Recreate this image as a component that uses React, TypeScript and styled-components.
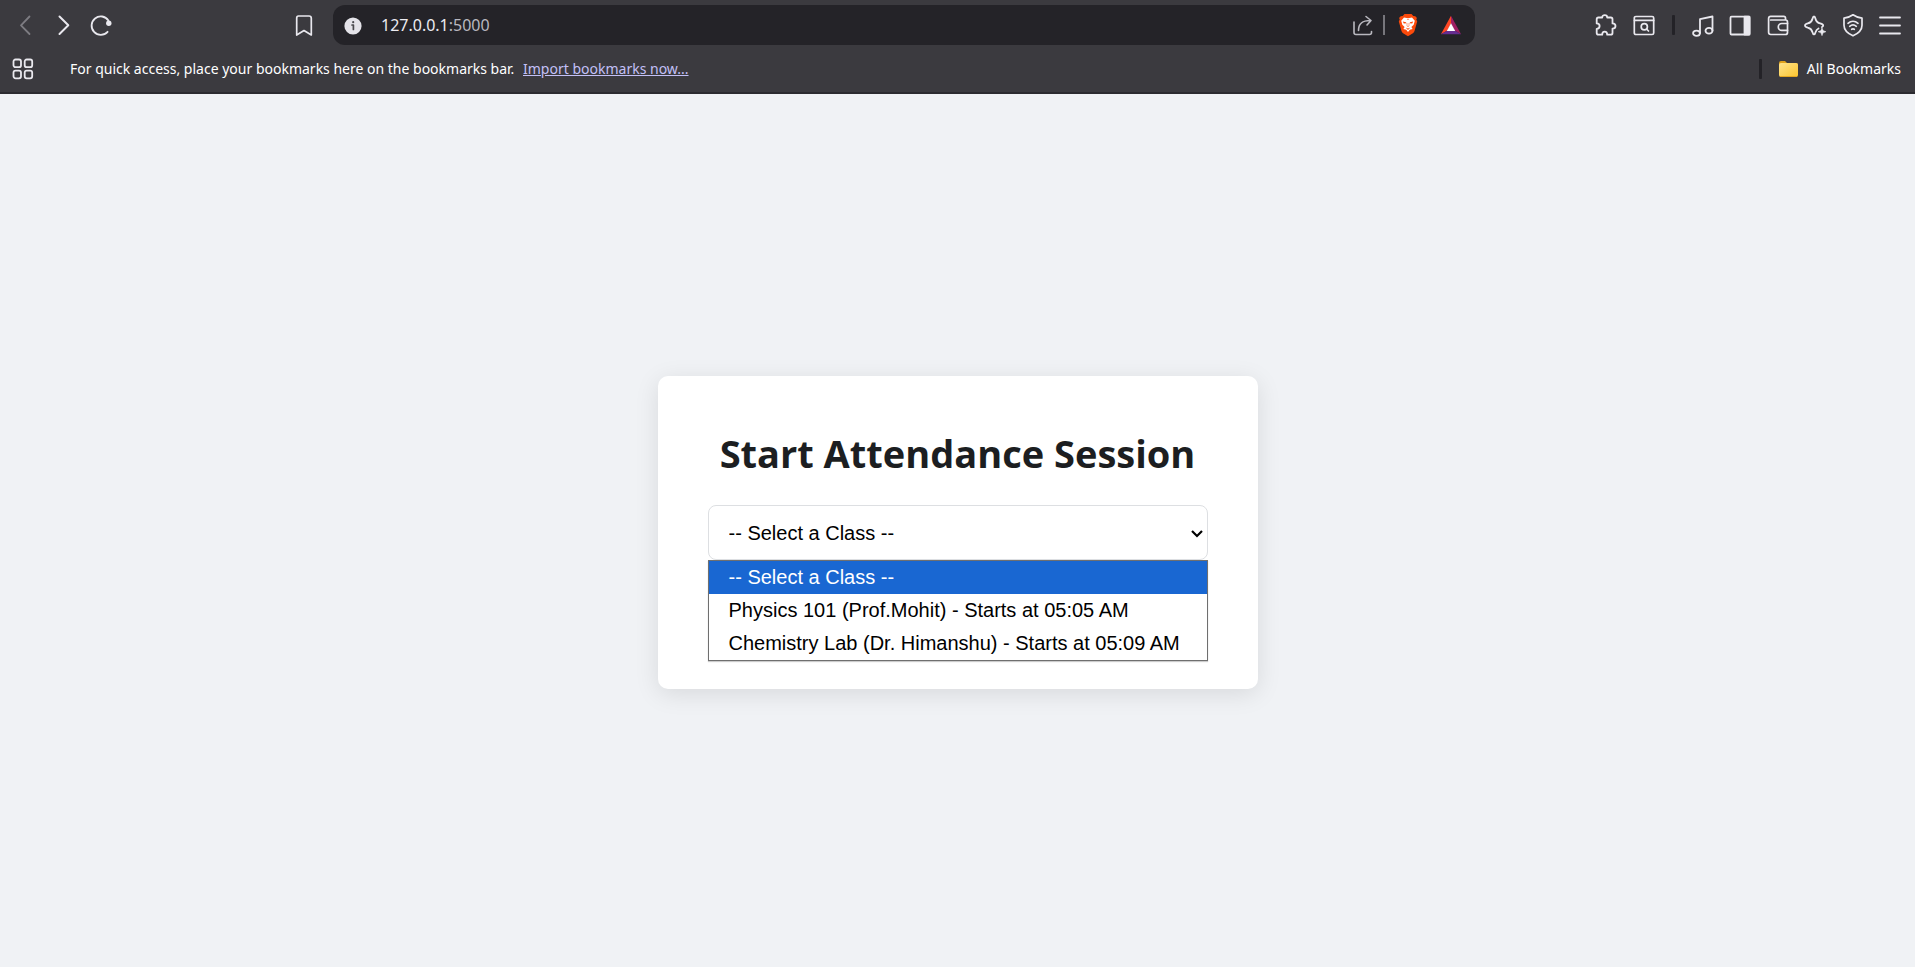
import React from "react";
import styled, { createGlobalStyle } from "styled-components";

const uiFont = '"Segoe UI", "Noto Sans", sans-serif';

const GlobalStyle = createGlobalStyle`
  *, *::before, *::after { box-sizing: border-box; }
  html, body { margin: 0; padding: 0; }
  body { background: #f0f2f5; font-family: ${uiFont}; }
`;

const Window = styled.div`
  display: flex;
  flex-direction: column;
  min-height: 100vh;
`;

const BrowserChrome = styled.header`
  background: #3b3a3f;
  border-bottom: 2px solid #2c2b30;
  color: #fff;
`;

const Toolbar = styled.div`
  display: flex;
  align-items: center;
  height: 50px;
  padding: 0 14px;
`;

const IconButton = styled.button<{ $dim?: boolean }>`
  display: flex;
  align-items: center;
  justify-content: center;
  flex: none;
  width: 22px;
  height: 24px;
  padding: 0;
  border: 0;
  background: none;
  color: ${(p) => (p.$dim ? "#7d7c82" : "#e9e8ee")};
`;

const NavGroup = styled.nav`
  display: flex;
  gap: 16px;
`;

const BookmarkSlot = styled.div`
  display: flex;
  flex: none;
  width: 221px;
  justify-content: flex-end;
  padding-right: 18px;
`;

const AddressBar = styled.form`
  display: flex;
  align-items: center;
  flex: 1;
  min-width: 0;
  height: 40px;
  margin-right: 120px;
  padding: 0 13px 0 9px;
  border-radius: 12px;
  background: #242328;
`;

const AddressField = styled.label`
  position: relative;
  flex: 1;
  min-width: 0;
  height: 24px;
  margin-left: 17px;
  font-size: 16px;
  line-height: 24px;
`;

const AddressInput = styled.input`
  display: block;
  width: 100%;
  height: 24px;
  padding: 0;
  border: 0;
  outline: 0;
  background: none;
  color: transparent;
  font: 16px/24px ${uiFont};
`;

const AddressText = styled.span`
  position: absolute;
  inset: 0;
  pointer-events: none;
  color: #b9b8bf;

  b { font-weight: 400; color: #ecebf1; }
`;

const AddressActions = styled.div`
  display: flex;
  align-items: center;
  button:first-child { color: #b9b8bf; }
`;

const AddressDivider = styled.span`
  width: 2px;
  height: 20px;
  margin: 0 12px 0 10px;
  background: #77767c;
`;

const BadgeGroup = styled.div`
  display: flex;
  gap: 21px;
`;

const ExtensionGroup = styled.div`
  display: flex;
  gap: 16px;
`;

const BarDivider = styled.span`
  flex: none;
  width: 3px;
  height: 20px;
  border-radius: 1px;
  background: #232227;
`;

const ExtensionDivider = styled(BarDivider)`
  margin: 0 17px;
`;

const ToolGroup = styled.div`
  display: flex;
  flex: none;
  justify-content: space-between;
  width: 209px;
`;

const BookmarksBar = styled.div`
  display: flex;
  align-items: center;
  height: 42px;
  padding: 0 14px 4px 12px;
  font-size: 14px;
  line-height: 20px;
`;

const BookmarksHint = styled.p`
  flex: 1;
  margin: 0 0 0 36px;
`;

const ImportLink = styled.a`
  margin-left: 5px;
  color: #c3c0f7;
  text-decoration: underline;
`;

const AllBookmarks = styled.button`
  display: flex;
  align-items: center;
  gap: 8px;
  margin-left: 17px;
  padding: 0;
  border: 0;
  background: none;
  color: #fff;
  font: 14px/20px ${uiFont};
`;

const Page = styled.main`
  display: flex;
  flex: 1;
  align-items: center;
  justify-content: center;
  padding: 20px 16px 16px;
`;

const Card = styled.section`
  width: 100%;
  max-width: 600px;
  padding: 50px;
  border-radius: 10px;
  background: #fff;
  box-shadow: 0 5px 25px rgba(0, 0, 0, 0.1);
`;

const Title = styled.h1`
  margin: 0 0 24px;
  color: #1c1e21;
  font-family: "Segoe UI", "Open Sans", sans-serif;
  font-size: 38px;
  font-weight: 700;
  line-height: 55px;
  text-align: center;
  white-space: nowrap;
`;

const ClassPicker = styled.div`
  position: relative;
  margin-bottom: 79px;
`;

const ClassSelect = styled.select`
  display: block;
  appearance: none;
  width: 100%;
  height: 55px;
  padding: 15px 20px;
  border: 1px solid #dddfe2;
  border-radius: 8px;
  outline: 0;
  background: #fff;
  color: #000;
  font: 20px "Liberation Sans", Arial, sans-serif;
`;

const SelectArrow = styled.svg`
  position: absolute;
  top: 24px;
  right: 4px;
  pointer-events: none;
`;

const OptionList = styled.ul`
  position: absolute;
  top: 100%;
  left: 0;
  right: 0;
  margin: 0;
  padding: 0;
  border: 1px solid #6f6f6f;
  background: #fff;
  box-shadow: 0 1px 1px rgba(0, 0, 0, 0.2);
  list-style: none;
`;

const Option = styled.li`
  height: 33px;
  padding-left: 20px;
  color: #000;
  font: 20px/33px "Liberation Sans", Arial, sans-serif;
  white-space: nowrap;

  &[aria-selected="true"] {
    background: #1967d2;
    color: #fff;
  }
`;

function Glyph({
  children,
  w = 22,
  h = 24,
  sw = 1.6,
}: {
  children: React.ReactNode;
  w?: number;
  h?: number;
  sw?: number;
}) {
  return (
    <svg
      width={w}
      height={h}
      viewBox={`0 0 ${w} ${h}`}
      fill="none"
      stroke="currentColor"
      strokeWidth={sw}
      strokeLinecap="round"
      strokeLinejoin="round"
      aria-hidden="true"
    >
      {children}
    </svg>
  );
}

const BackIcon = () => <Glyph sw={1.8}><path d="M15.500 3.500 7 12.300 15.500 21" /></Glyph>;
const ForwardIcon = () => <Glyph sw={2}><path d="M7.500 3.500 16.300 12.300 7.500 21" /></Glyph>;
const ReloadIcon = () => (
  <Glyph sw={1.8}>
    <path d="M17.600 18.800A9.200 9.200 0 1 1 18.400 7.400" />
    <circle cx="18.800" cy="10.300" r="2.700" fill="currentColor" stroke="none" />
  </Glyph>
);
const BookmarkIcon = () => (
  <Glyph sw={1.7}><path d="M5.500 3h10.500q2.300 0 2.300 2.300V22L11 17.500 3.700 22V5.300Q3.700 3 5.500 3Z" /></Glyph>
);
const InfoIcon = () => (
  <Glyph>
    <circle cx="11" cy="13" r="8.600" fill="#e4e3e9" stroke="none" />
    <path d="M10 12h1.400v4.500" stroke="#4a494e" strokeWidth="1.700" />
    <circle cx="11.200" cy="9.200" r="1.100" fill="#4a494e" stroke="none" />
  </Glyph>
);
const ShareIcon = () => (
  <Glyph sw={1.6}>
    <path d="M3 9v10.500q0 2 2 2h13.500q2 0 2-2V18.500" />
    <path d="M7.500 17.500C7.500 11 10.500 7.500 19.500 7.500M15 3.500l5 4-4 4.500" />
  </Glyph>
);
const BraveIcon = () => (
  <svg width="22" height="24" viewBox="0 0 22 24" aria-hidden="true">
    <path
      d="M7.500 1h7l1.800 2q2.300-.5 3.600 2l-.6 1.400.9 2.200-2.700 9.500q-.4 1.400-1.600 2.200L11 23.200l-4.900-2.900q-1.200-.8-1.600-2.200L1.800 8.600l.9-2.200L2.100 5q1.300-2.500 3.600-2Z"
      fill="#fb4a0b"
    />
    <path
      d="M7 4.500 11 5.300 15 4.500 17.800 7.800 16.700 11.800 14.400 14 15.600 16 12.800 16.800 11 19 9.200 16.800 6.400 16 7.600 14 5.300 11.800 4.200 7.800Z"
      fill="#fff"
    />
    <path
      d="M5.800 8.600 9 9.200 9.400 10.200 6.800 10.600ZM16.200 8.600 13 9.200 12.600 10.200 15.200 10.600ZM9.600 6.200h2.800l-1.400.8ZM8.600 14.400l2.400 1 2.400-1-2.400 2.500Z"
      fill="#fb4a0b"
    />
    <path d="M10 10v3l1 .8 1-.8v-3" fill="none" stroke="#fb4a0b" strokeWidth="0.500" />
  </svg>
);
const RewardsIcon = () => (
  <svg width="24" height="24" viewBox="0 0 24 24" aria-hidden="true">
    <path d="M12 2 1 22l7-4 4-7.500Z" fill="#ff4724" />
    <path d="M12 2v8.500l4 7.500 7 4Z" fill="#9e1f63" />
    <path d="M1 22h22l-7-4H8Z" fill="#662d91" />
    <path d="m12 10.200 4.600 8.300H7.400Z" fill="#fff" />
  </svg>
);
const PuzzleIcon = () => (
  <Glyph sw={1.8}>
    <path d="M1.700 6.200q0-1.700 1.700-1.700h3.800C7.200 1.400 12.200 1.400 12.200 4.500h3.600q1.700 0 1.700 1.700v4.200c4 0 4 5.200 0 5.200V20q0 1.700-1.700 1.700h-3.600c0-4-5-4-5 0H3.400q-1.700 0-1.700-1.700v-4.200c3.900 0 3.900-5.400 0-5.400Z" />
  </Glyph>
);
const FindPageIcon = () => (
  <Glyph sw={1.7}>
    <rect x="1.300" y="3.500" width="19.400" height="18" rx="1.600" />
    <path d="M1.500 7.400h19.200" />
    <circle cx="11.300" cy="13.700" r="3.100" />
    <path d="m13.600 16 1.900 2" />
  </Glyph>
);
const MusicIcon = () => (
  <Glyph sw={1.8}>
    <ellipse cx="4.500" cy="20.200" rx="3.400" ry="2.600" />
    <ellipse cx="17" cy="17.800" rx="3.500" ry="2.900" />
    <path d="M8 20V6.200L20.500 3.500v14" />
  </Glyph>
);
const SidebarIcon = () => (
  <Glyph sw={1.8}>
    <rect x="1.500" y="3.700" width="19" height="17.800" rx="1" />
    <path d="M15.500 3.700h5v17.800h-5Z" fill="currentColor" />
  </Glyph>
);
const WalletIcon = () => (
  <Glyph sw={1.7}>
    <path d="M18.500 7V5q0-1.600-1.600-1.600H3.800Q1.600 3.400 1.600 5.600v13.700q0 2.200 2.200 2.200h14.700q2 0 2-2V9q0-2-2-2H3.700" />
    <path d="M20.500 10.500h-5.800a3.400 3.400 0 0 0 0 6.800h5.800" />
  </Glyph>
);
const SparkleIcon = () => (
  <Glyph sw={1.8}>
    <path d="M14.500 15.500C12.600 16.300 12 17.500 11.500 19.300c-.3 1.300-.7 2-1.500 2s-1.200-.7-1.500-2c-.7-3-1.800-4-4.700-4.700C2 14.100 1 13.500 1 12.500s1-1.600 2.800-2.100c2.900-.7 4-1.700 4.700-4.700C8.800 4.400 9.200 3.500 10 3.500s1.200.9 1.500 2.200c.7 3 1.800 4 4.700 4.700 1.800.5 3 1.100 3 2.100q0 .9-1.200 1.500" />
    <path d="m18 14.800 1.100 2.800 2.900 1.100-2.900 1.100-1.100 2.900-1.100-2.900-2.900-1.100 2.900-1.100Z" fill="currentColor" strokeWidth="0.500" />
  </Glyph>
);
const ShieldIcon = () => (
  <Glyph sw={1.7}>
    <path d="M11 1.800c2.700 1.900 5.400 3 9 3.400v7c0 5.400-3.900 8.300-9 10.600-5.100-2.300-9-5.200-9-10.600v-7c3.600-.4 6.300-1.500 9-3.400Z" />
    <path d="M6 10.300c3-2.600 7-2.600 10 0M7.700 13.300c2-1.600 4.600-1.600 6.600 0" />
    <path d="M9.700 16.300q1.300-.8 2.600 0" />
  </Glyph>
);
const MenuIcon = () => <Glyph sw={1.8}><path d="M1 4.500h20M1 12.500h20M1 20.500h20" /></Glyph>;
const AppsIcon = () => (
  <Glyph sw={1.8}>
    <rect x="1.500" y="2.500" width="7.500" height="7.700" rx="2" />
    <rect x="12.700" y="2.500" width="7.500" height="7.700" rx="2" />
    <rect x="1.500" y="13.600" width="7.500" height="7.700" rx="2" />
    <rect x="12.700" y="13.600" width="7.500" height="7.700" rx="2" />
  </Glyph>
);
const FolderIcon = () => (
  <svg width="20" height="18" viewBox="0 0 20 18" aria-hidden="true">
    <defs>
      <linearGradient id="folder" x1="0" y1="0" x2="1" y2="1">
        <stop offset="0" stopColor="#ffe48c" />
        <stop offset="1" stopColor="#fcc52e" />
      </linearGradient>
    </defs>
    <path d="M0 3q0-2 2-2h4l2 2h9q2 0 2 2v4H0Z" fill="#e0a21b" />
    <rect x="0" y="3" width="19" height="14" rx="2" fill="url(#folder)" />
    <path d="M1 16.500h17" stroke="#e6a820" />
  </svg>
);

const classes = [
  "-- Select a Class --",
  "Physics 101 (Prof.Mohit) - Starts at 05:05 AM",
  "Chemistry Lab (Dr. Himanshu) - Starts at 05:09 AM",
];

export default function App() {
  return (
    <Window>
      <GlobalStyle />
      <BrowserChrome>
        <Toolbar>
          <NavGroup aria-label="History">
            <IconButton aria-label="Back" $dim><BackIcon /></IconButton>
            <IconButton aria-label="Forward"><ForwardIcon /></IconButton>
            <IconButton aria-label="Reload"><ReloadIcon /></IconButton>
          </NavGroup>
          <BookmarkSlot>
            <IconButton aria-label="Bookmark this page"><BookmarkIcon /></IconButton>
          </BookmarkSlot>
          <AddressBar onSubmit={(e) => e.preventDefault()}>
            <IconButton type="button" aria-label="Site information"><InfoIcon /></IconButton>
            <AddressField>
              <AddressInput aria-label="Address" />
              <AddressText><b>127.0.0.1</b>:5000</AddressText>
            </AddressField>
            <AddressActions>
              <IconButton type="button" aria-label="Share"><ShareIcon /></IconButton>
              <AddressDivider />
              <BadgeGroup>
                <IconButton type="button" aria-label="Shields"><BraveIcon /></IconButton>
                <IconButton type="button" aria-label="Rewards"><RewardsIcon /></IconButton>
              </BadgeGroup>
            </AddressActions>
          </AddressBar>
          <ExtensionGroup>
            <IconButton aria-label="Extensions"><PuzzleIcon /></IconButton>
            <IconButton aria-label="Search tabs"><FindPageIcon /></IconButton>
          </ExtensionGroup>
          <ExtensionDivider />
          <ToolGroup>
            <IconButton aria-label="Media"><MusicIcon /></IconButton>
            <IconButton aria-label="Sidebar"><SidebarIcon /></IconButton>
            <IconButton aria-label="Wallet"><WalletIcon /></IconButton>
            <IconButton aria-label="Assistant"><SparkleIcon /></IconButton>
            <IconButton aria-label="VPN"><ShieldIcon /></IconButton>
            <IconButton aria-label="Menu"><MenuIcon /></IconButton>
          </ToolGroup>
        </Toolbar>
        <BookmarksBar>
          <IconButton aria-label="Apps"><AppsIcon /></IconButton>
          <BookmarksHint>
            For quick access, place your bookmarks here on the bookmarks bar.{" "}
            <ImportLink href="#import">Import bookmarks now...</ImportLink>
          </BookmarksHint>
          <BarDivider />
          <AllBookmarks>
            <FolderIcon />
            All Bookmarks
          </AllBookmarks>
        </BookmarksBar>
      </BrowserChrome>
      <Page>
        <Card>
          <Title>Start Attendance Session</Title>
          <ClassPicker>
            <ClassSelect aria-label="Class" defaultValue={classes[0]}>
              {classes.map((name) => (
                <option key={name}>{name}</option>
              ))}
            </ClassSelect>
            <SelectArrow width="14" height="10" viewBox="0 0 14 10" aria-hidden="true">
              <path d="m2 2 5 5 5-5" fill="none" stroke="#000" strokeWidth="2.200" />
            </SelectArrow>
            <OptionList role="listbox" aria-label="Classes">
              {classes.map((name, i) => (
                <Option key={name} role="option" aria-selected={i === 0}>
                  {name}
                </Option>
              ))}
            </OptionList>
          </ClassPicker>
        </Card>
      </Page>
    </Window>
  );
}
